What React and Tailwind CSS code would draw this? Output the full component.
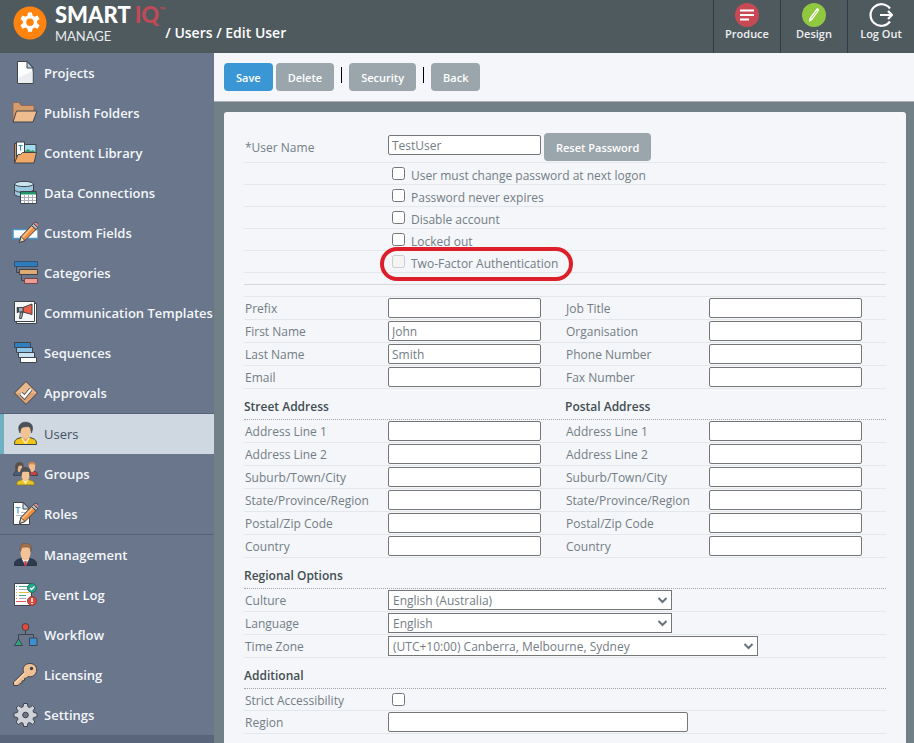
import React, { useState } from "react";

const OUT = "#3f444b";

const Pencil = () => (
  <g strokeLinejoin="round">
    <path d="M7.500 22.500l1.500-6L19.500 5.500l4.500 4L13 20.500z" fill="#ee9040" stroke={OUT} />
    <path d="M7.500 22.500l1.500-6 4 4z" fill="#f8dcb8" stroke={OUT} />
    <path d="M10.500 17.500L20.500 7" stroke="#ffc48a" strokeWidth="1.500" />
    <path d="M19.500 5.500l2-2 4.500 4-2 2z" fill="#b9bec6" stroke={OUT} />
    <path d="M21.500 3.500c1.500-1.500 3-1.500 4-.5s1.500 3 .5 4.500z" fill="#e58f8c" stroke={OUT} />
  </g>
);

const icons = {
  projects: (
    <>
      <path d="M5.500 1.500h10l5.500 6v16H5.500z" fill="#fdfdfe" stroke={OUT} />
      <path d="M6 18l14.500-7v12H6z" fill="#eceef1" />
      <path d="M15 1.500l6 6.500h-6z" fill="#b9d3e6" stroke={OUT} />
    </>
  ),
  folders: (
    <>
      <path d="M1 21.500V2.500h6l2 3h13v6" fill="#d69c6d" stroke="#8d6a55" />
      <path d="M4.500 11h20.500l-4 11H1z" fill="#efbc8b" stroke={OUT} strokeLinejoin="round" />
    </>
  ),
  library: (
    <>
      <path d="M2.500 23V3.500h3V10h19" fill="#d48f56" stroke={OUT} />
      <path d="M4.500 2h8v15h-8z" fill="#fff" stroke={OUT} />
      <path d="M6.500 5.500h4M8.500 5.500v5" stroke="#3f83bb" strokeWidth="1.200" />
      <path d="M12.500 4.500h11.500v9H12.500z" fill="#9fdcf2" stroke={OUT} />
      <path d="M13 13v-2l3-2 3 2 2-1 2.500 2v1z" fill="#3f9a74" />
      <path d="M6 14.500h2.500l2-2H24.500l-2.500 10.500H2.500z" fill="#efa868" stroke={OUT} strokeLinejoin="round" />
    </>
  ),
  data: (
    <>
      <path d="M2.500 4v10c0 1.500 4 3 9.500 3s9.500-1.500 9.500-3V4" fill="#9cc9e2" stroke={OUT} />
      <path d="M2.500 9.500c0 1.500 4 3 9.500 3s9.500-1.500 9.500-3" stroke={OUT} />
      <ellipse cx="12" cy="4" rx="9.500" ry="2.600" fill="#cbe4f1" stroke={OUT} />
      <path d="M8.500 11.500h16v12h-16z" fill="#fff" stroke={OUT} />
      <path d="M9 12h15v2.500H9z" fill="#23936a" />
      <path d="M9 17.500h15M9 20.500h15M12.500 15v8M16.500 15v8M20.500 15v8" stroke="#a9aeb8" />
    </>
  ),
  fields: (
    <>
      <path d="M1 9.500h25v9H1z" fill="#fff" stroke="#4a96ca" strokeWidth="1.500" />
      <Pencil />
    </>
  ),
  categories: (
    <>
      <path d="M4.500 6v6.500H8M9.500 14v6.500H13" stroke={OUT} />
      <path d="M2.500 1.500h23v5h-23z" fill="#2c7cc0" stroke="#34516e" />
      <path d="M7.500 9.500h18v5h-18z" fill="#e0ab72" stroke={OUT} />
      <path d="M12.500 18.500h13v5h-13z" fill="#ee9c96" stroke="#75444a" />
    </>
  ),
  templates: (
    <>
      <path d="M4.500 3.500h20v20h-20z" fill="#fff" stroke={OUT} />
      <path d="M2.500 1.500h20v20h-20z" fill="#f5f6f7" stroke={OUT} />
      <path d="M11 7.500l9-3.500v10.500L11 12z" fill="#ec5f48" stroke={OUT} />
      <path d="M6.500 7.500H11V12H6.500zM8.500 12h2.500l-1.500 6.500H7.500z" fill="#a6adb5" stroke={OUT} />
      <path d="M5.500 7v6" stroke={OUT} strokeWidth="1.500" />
    </>
  ),
  sequences: (
    <g stroke={OUT}>
      <path d="M2.500 2.500h16v5h-16z" fill="#2f80bd" />
      <path d="M4.500 7.500h16v5h-16z" fill="#8ec3e6" />
      <path d="M6.500 12.500h16v5h-16z" fill="#c9e2f1" />
      <path d="M8.500 17.500h16v5h-16z" fill="#fff" />
    </g>
  ),
  approvals: (
    <>
      <path d="M14 1.500L25.500 13 14 24.500 2.500 13z" fill="#dda374" stroke={OUT} />
      <path d="M14 2.500L24.500 13 3.500 13z" fill="#eab98d" />
      <path d="M9 13.500l3.500 3.500 6.500-8" stroke={OUT} strokeWidth="4" />
      <path d="M9 13.500l3.500 3.500 6.500-8" stroke="#fff" strokeWidth="2.500" />
    </>
  ),
  users: (
    <>
      <path d="M2.500 23.500c0-4 1-5 3.500-6l5-1.500h5l5 1.500c2.500 1 3.500 2 3.500 6z" fill="#f0c419" stroke={OUT} />
      <path d="M9.500 16.500l4 6.500 4-6.500" fill="#fff2b8" stroke="#fff2b8" />
      <path d="M11 14v3.500l2.500 4 2.500-4V14z" fill="#e6a877" />
      <path d="M8.500 6h10v5c0 4-2.500 6.500-5 6.500s-5-2.500-5-6.500z" fill="#f3c295" />
      <path
        d="M8 12C6 8 6.500 4.500 8.500 3c2-2.500 8-2.500 10.500 0 2 2 2 5 .5 9l-1-4.500c-.5-1-1-1.500-2-2-2 .5-5 0-6.500 1-1 .5-1.500 3-2 5.500z"
        fill="#4d5055"
        stroke={OUT}
        strokeWidth=".6"
      />
    </>
  ),
  groups: (
    <>
      <path d="M1.500 14.500c0-3 1.500-4 4-4.500h4l2 4.500z" fill="#4d5f7f" stroke={OUT} />
      <path d="M17 14.500l1.500-4.500h3c2.500.5 4 1.500 4 4.500z" fill="#c9443f" stroke={OUT} />
      <path d="M5 3.500h5v4c0 2-1 3.500-2.500 3.500S5 9.500 5 7.500z" fill="#e8b98f" />
      <path d="M3.500 10.500c-1-6 0-9.500 4-9.500s5 3 3.500 7L9.500 4.500 6.500 5 5.500 10z" fill="#594f4c" />
      <path d="M17 2.500h6v5c0 2-1.500 3.500-3 3.500s-3-1.500-3-3.500z" fill="#f0bd8e" />
      <path d="M16.500 6c-.5-3.500.5-5 3.500-5s4 1.500 3.500 5l-1-2.500c-2 0-4-.5-5 0z" fill="#cf8b4e" />
      <path d="M4.500 24c0-3 1-4 3-4.500l4-1.500h4l4 1.500c2 .5 3 1.500 3 4.500z" fill="#e8c429" stroke="#8a7a33" />
      <path d="M10.500 18.500l3 5 3-5" fill="#fff2b8" />
      <path d="M9.500 10h8v4.500c0 3.500-2 5.500-4 5.500s-4-2-4-5.500z" fill="#f3c295" />
      <path d="M9 15.500C7 9 9 6 13.500 6s6.500 3 4.500 9.500l-1-4.500c-2-.5-5-.5-6.500 0z" fill="#4d5055" />
    </>
  ),
  roles: (
    <>
      <path d="M1.500 1.500h10l6 6v16h-16z" fill="#fff" stroke={OUT} />
      <path d="M11 1.500V8h6.500z" fill="#c9dcea" stroke={OUT} />
      <path d="M3.500 6.500h5M6 6.500v6" stroke="#4a9bd0" strokeWidth="1.200" />
      <path d="M9 11.500h6M4 14.500h9" stroke="#b3b9c2" />
      <Pencil />
    </>
  ),
  management: (
    <>
      <path d="M2.500 23.500c0-4 1-5 3.500-6l5-1.500h5l5 1.500c2.500 1 3.500 2 3.500 6z" fill="#2d3b4f" stroke="#2b3240" />
      <path d="M9.500 16.500l4 7 4-7z" fill="#f6f7f9" />
      <path d="M12.500 19h2l.5 4.500h-3z" fill="#cf3f40" />
      <path d="M8.500 5h10v6c0 4-2.500 7.500-5 7.500s-5-3.500-5-7.500z" fill="#f3c295" />
      <path
        d="M8.500 9.500C7.500 4.500 8.500 1.500 13.500 1.500s6.500 2.500 5.500 8l-1-3.500c-1-1-2-1-4-1-2 0-3.500 0-4.500 1z"
        fill="#a5734a"
        stroke="#6a5140"
        strokeWidth=".6"
      />
    </>
  ),
  eventlog: (
    <>
      <path d="M2.500 1.500h17v22h-17z" fill="#fff" stroke={OUT} />
      <path d="M4 4.500h1M7 4.500h9M7 13.500h7" stroke="#3fa58b" />
      <path d="M4 10.500h1M7 10.500h10" stroke="#d9bd3d" />
      <path d="M4 7.500h1M7 7.500h8M4 13.500h1M7 16.500h7" stroke="#aab0ba" />
      <path d="M4 16.500h1M4 19.500h10" stroke="#dd5a52" />
      <circle cx="20" cy="6" r="4.500" fill="#21a78b" stroke="#2b6a61" />
      <path d="M18 6l1.500 1.500L22.500 4.500" stroke="#fff" strokeWidth="1.300" />
      <circle cx="20" cy="19" r="4.500" fill="#e2483c" stroke="#8d3a3a" />
      <path d="M20 16v4M20 21v1.200" stroke="#fff" strokeWidth="1.500" />
    </>
  ),
  workflow: (
    <>
      <path d="M13.500 8v4.500M6.500 17v-4.500h15V16" stroke={OUT} />
      <circle cx="13.500" cy="5" r="3.500" fill="#e5493a" stroke={OUT} />
      <path d="M6.500 17l4 6.500h-8z" fill="#2fa584" stroke={OUT} />
      <path d="M17.500 16h7.500v7.500h-7.500z" fill="#3c8fd3" stroke={OUT} />
    </>
  ),
  licensing: (
    <>
      <path
        d="M11.500 10.500C10 5 13 1.500 18 1.500s7.500 4 6.500 8-4.500 6-8.500 5l-1.500 1.500-2 .5v2l-2.500.5v2l-2 .5-2 2H1.500V20z"
        fill="#eec093"
        stroke={OUT}
        strokeLinejoin="round"
      />
      <path d="M3 21l9.500-9.500" stroke="#fbe0c2" />
      <circle cx="19.500" cy="6.500" r="1.700" fill={OUT} />
    </>
  ),
  settings: (
    <path
      fill="#d0d4da"
      stroke={OUT}
      strokeLinejoin="round"
      fillRule="evenodd"
      d="M11 4.800L11.700 1.500h3.600L16 4.800l1.600.7 2.900-1.900 2.400 2.400-1.900 2.900.7 1.600 3.300.7v3.600l-3.300.7-.7 1.600 1.900 2.900-2.400 2.400-2.900-1.900-1.600.7-.7 3.300h-3.600l-.7-3.300-1.600-.7-2.900 1.900-2.400-2.400L6 17.100l-.7-1.600L2 14.800v-3.600l3.300-.7L6 8.900 4.100 6l2.400-2.400 2.900 1.900zM13.500 10.200a2.800 2.800 0 1 0 0 5.600 2.800 2.800 0 1 0 0-5.600z"
    />
  ),
};

const navGroups = [
  [
    ["projects", "Projects"],
    ["folders", "Publish Folders"],
    ["library", "Content Library"],
    ["data", "Data Connections"],
    ["fields", "Custom Fields"],
    ["categories", "Categories"],
    ["templates", "Communication Templates"],
    ["sequences", "Sequences"],
    ["approvals", "Approvals"],
  ],
  [
    ["users", "Users"],
    ["groups", "Groups"],
    ["roles", "Roles"],
  ],
  [
    ["management", "Management"],
    ["eventlog", "Event Log"],
    ["workflow", "Workflow"],
    ["licensing", "Licensing"],
    ["settings", "Settings"],
  ],
];

const addressFields = [
  "Address Line 1",
  "Address Line 2",
  "Suburb/Town/City",
  "State/Province/Region",
  "Postal/Zip Code",
  "Country",
];

const inputClass =
  "h-5 rounded-[2px] border border-[#767676] bg-white px-[3px] text-[#737d85] outline-none";

const labelClass = "w-36 shrink-0 pt-0.5 pl-px";

const HeaderLink = ({ label, children }) => (
  <a
    href="#"
    className="flex w-[67px] flex-col items-center border-l border-[#2f3a49] pt-[3px] text-[11px] font-semibold text-[#eef0f2]"
  >
    <svg width="24" height="24" viewBox="0 0 24 24" fill="none">
      {children}
    </svg>
    <span className="leading-[14px]">{label}</span>
  </a>
);

const Header = () => (
  <header className="flex h-[53px] justify-between bg-[#4f5a5f]">
    <div className="flex">
      <svg className="mt-[6px] ml-[13px]" width="34" height="34" viewBox="0 0 34 34">
        <circle cx="17" cy="17" r="16.500" fill="#ff830f" />
        <path
          fill="#fff"
          fillRule="evenodd"
          d="M14.500 9.500L15 6.500h4l.5 3 2 1.200 3-1.200 2 3.400-2.400 2v2.400l2.400 2-2 3.400-3-1.200-2 1.200-.5 3h-4l-.5-3-2-1.200-3 1.200-2-3.400 2.400-2v-2.400l-2.400-2 2-3.400 3 1.200zM17 12.400a3.800 3.800 0 1 0 0 7.600 3.800 3.800 0 1 0 0-7.600z"
        />
      </svg>
      <div className="ml-2 pt-0.5 font-[Lato,sans-serif]">
        <div className="flex text-[22px] leading-[26px] font-black text-white">
          <span>SMART</span>
          <span className="ml-1 text-[#c04a57]">IQ</span>
          <span className="text-[8px] leading-4 font-bold text-[#c04a57]">™</span>
        </div>
        <div className="text-[13px] leading-4 text-[#e8ebed]">MANAGE</div>
      </div>
      <div className="pt-[23px] text-sm leading-5 font-semibold text-white">
        / Users / Edit User
      </div>
    </div>
    <nav className="flex">
      <HeaderLink label="Produce">
        <circle cx="12" cy="12" r="12" fill="#c74954" />
        <path d="M5 7.500h14M5 12h14M5 16.500h9" stroke="#fff" strokeWidth="2.200" />
      </HeaderLink>
      <HeaderLink label="Design">
        <circle cx="12" cy="12" r="12" fill="#90c83f" />
        <path
          d="M7 19l.5-4L14.500 5.800c.8-1.200 3.300.3 2.500 1.700L10.300 17z"
          fill="#fff"
        />
        <path d="M9.300 15.500l6-8" stroke="#90c83f" strokeWidth=".8" />
      </HeaderLink>
      <HeaderLink label="Log Out">
        <path d="M21 5.500A10.800 10.800 0 1 0 21 18.500" stroke="#fff" strokeWidth="2.200" />
        <path d="M11 12h12M19 8l4 4-4 4" stroke="#fff" strokeWidth="2.200" />
      </HeaderLink>
    </nav>
  </header>
);

const Sidebar = ({ active, onSelect }) => (
  <aside className="w-[214px] shrink-0 bg-[#58657a]">
    {navGroups.map((group, i) => (
      <ul
        key={i}
        className="border-t border-[#566278] bg-[#69768c] first:border-t-0"
      >
        {group.map(([key, label]) => (
          <li key={key}>
            <a
              href="#"
              onClick={() => onSelect(key)}
              className={
                "flex h-10 items-center gap-[6px] border-l-4 pl-2 text-[13px] whitespace-nowrap " +
                (active === key
                  ? "border-[#6fb1c1] bg-[#cfd7e1] text-[#435064]"
                  : "border-transparent font-semibold text-[#f4f6f9]")
              }
            >
              <svg className="shrink-0" width="26" height="26" viewBox="0 0 26 26" fill="none">
                {icons[key]}
              </svg>
              <span className="pt-0.5">{label}</span>
            </a>
          </li>
        ))}
      </ul>
    ))}
  </aside>
);

const Button = ({ children, className = "bg-[#9aa6ac]" }) => (
  <button
    type="button"
    className={
      "h-7 rounded px-3 pt-0.5 text-[11px] font-semibold whitespace-nowrap text-white " + className
    }
  >
    {children}
  </button>
);

const Divider = () => <span className="mx-1 mb-1 h-4 w-px bg-black" />;

const Row = ({ children }) => (
  <div className="flex h-[23px] items-center border-b border-[#e5e8eb]">{children}</div>
);

const Field = ({ id, label, value = "" }) => (
  <div className="flex flex-1 items-center">
    <label htmlFor={id} className={labelClass}>
      {label}
    </label>
    <input id={id} type="text" defaultValue={value} className={inputClass + " w-[153px]"} />
  </div>
);

const Check = ({ id, label, disabled }) => (
  <div className="flex h-[22px] border-b border-[#e5e8eb] pt-1 pl-[148px]">
    <input id={id} type="checkbox" disabled={disabled} className="h-[13px] w-[13px]" />
    <label htmlFor={id} className="ml-[6px] leading-[18px]">
      {label}
    </label>
  </div>
);

const Heading = ({ children }) => (
  <div className="flex h-[31px] items-center border-b border-dotted border-[#9da3a8] pt-[6px] font-semibold text-[#434d52]">
    {children}
  </div>
);

const Select = ({ id, label, value, className }) => (
  <Row>
    <label htmlFor={id} className={labelClass}>
      {label}
    </label>
    <div className={"relative " + className}>
      <select
        id={id}
        className="block h-5 w-full appearance-none border border-[#767676] bg-white px-1 pt-px outline-none"
      >
        <option>{value}</option>
      </select>
      <svg
        className="pointer-events-none absolute top-[6px] right-1"
        width="11"
        height="8"
        viewBox="0 0 11 8"
        fill="none"
      >
        <path d="M1.500 2l4 4 4-4" stroke="#66737c" strokeWidth="2" />
      </svg>
    </div>
  </Row>
);

const EditUserForm = () => (
  <form className="mr-2 ml-[10px] flex-1 rounded-t-[3px] bg-[#f4f6f9] p-5 pb-0 text-xs text-[#737d85]">
    <div className="flex h-[31px] items-center border-b border-[#e5e8eb]">
      <label htmlFor="username" className={labelClass}>
        *User Name
      </label>
      <input
        id="username"
        type="text"
        defaultValue="TestUser"
        className={inputClass + " mr-[3px] mb-1 w-[153px]"}
      />
      <Button>Reset Password</Button>
    </div>
    <Check id="mustchange" label="User must change password at next logon" />
    <Check id="neverexpires" label="Password never expires" />
    <Check id="disableaccount" label="Disable account" />
    <Check id="lockedout" label="Locked out" />
    <div className="relative">
      <Check id="twofactor" label="Two-Factor Authentication" disabled />
      <div className="pointer-events-none absolute -top-1 left-[136px] h-[34px] w-[193px] rounded-[18px] border-4 border-[#dc1f2b]" />
    </div>

    <hr className="my-[11px] border-[#d5d9dc]" />

    <div className="border-t border-[#e5e8eb]">
      <Row>
        <Field id="prefix" label="Prefix" />
        <Field id="jobtitle" label="Job Title" />
      </Row>
      <Row>
        <Field id="firstname" label="First Name" value="John" />
        <Field id="organisation" label="Organisation" />
      </Row>
      <Row>
        <Field id="lastname" label="Last Name" value="Smith" />
        <Field id="phone" label="Phone Number" />
      </Row>
      <Row>
        <Field id="email" label="Email" />
        <Field id="fax" label="Fax Number" />
      </Row>
    </div>

    <Heading>
      <h2 className="flex-1">Street Address</h2>
      <h2 className="flex-1">Postal Address</h2>
    </Heading>
    {addressFields.map((label, i) => (
      <Row key={label}>
        <Field id={`street${i}`} label={label} />
        <Field id={`postal${i}`} label={label} />
      </Row>
    ))}

    <Heading>
      <h2>Regional Options</h2>
    </Heading>
    <Select id="culture" label="Culture" value="English (Australia)" className="w-[284px]" />
    <Select id="language" label="Language" value="English" className="w-[284px]" />
    <Select
      id="timezone"
      label="Time Zone"
      value="(UTC+10:00) Canberra, Melbourne, Sydney"
      className="w-[370px]"
    />

    <Heading>
      <h2>Additional</h2>
    </Heading>
    <div className="flex h-[22px] items-center border-b border-[#e5e8eb]">
      <label htmlFor="strict" className={labelClass}>
        Strict Accessibility
      </label>
      <input id="strict" type="checkbox" className="ml-1 h-[13px] w-[13px]" />
    </div>
    <Row>
      <label htmlFor="region" className={labelClass}>
        Region
      </label>
      <input id="region" type="text" className={inputClass + " w-[300px]"} />
    </Row>
  </form>
);

const App = () => {
  const [active, setActive] = useState("users");

  return (
    <div className="flex min-h-screen flex-col bg-[#717f87] font-['Open_Sans','Noto_Sans',sans-serif]">
      <Header />
      <div className="flex flex-1">
        <Sidebar active={active} onSelect={setActive} />
        <main className="flex min-w-0 flex-1 flex-col">
          <div className="mb-[10px] flex h-[49px] items-center gap-[3px] border-b border-[#a9afb3] bg-[#f4f6f9] pl-[10px]">
            <Button className="bg-[#3a96d4]">Save</Button>
            <Button>Delete</Button>
            <Divider />
            <Button>Security</Button>
            <Divider />
            <Button>Back</Button>
          </div>
          <EditUserForm />
        </main>
      </div>
    </div>
  );
};

export default App;
